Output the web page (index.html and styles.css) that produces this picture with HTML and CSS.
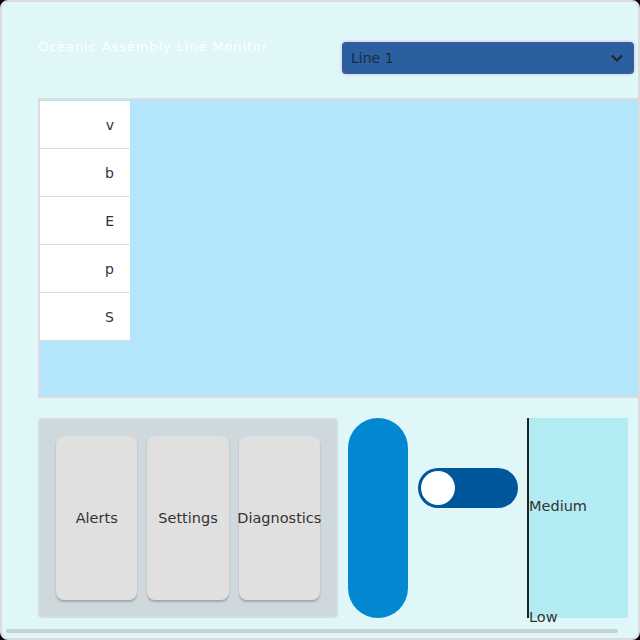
FILE: index.html
```html
<!DOCTYPE html>
<html>
<head>
<meta charset="utf-8">
<link rel="stylesheet" href="styles.css">
</head>
<body>
<div class="app">
  <div class="header">
    <div class="title">Oceanic Assembly Line Monitor</div>
    <div class="select">
      <span class="select-text">Line 1</span>
      <svg class="chev" width="14" height="10" viewBox="0 0 14 10"><path d="M2 2.5 L7 7.5 L12 2.5" fill="none" stroke="#1c2530" stroke-width="2.2"/></svg>
    </div>
  </div>
  <div class="chart">
    <div class="legend">
      <div class="cell">v</div>
      <div class="cell">b</div>
      <div class="cell">E</div>
      <div class="cell">p</div>
      <div class="cell">S</div>
    </div>
  </div>
  <div class="controls">
    <div class="btn-panel">
      <div class="btn">Alerts</div>
      <div class="btn">Settings</div>
      <div class="btn">Diagnostics</div>
    </div>
    <div class="pill"></div>
    <div class="toggle-wrap">
      <div class="toggle"><div class="knob"></div></div>
    </div>
    <div class="gauge">
      <span class="g-label g-medium">Medium</span>
      <span class="g-label g-low">Low</span>
    </div>
  </div>
  <div class="scrollbar"></div>
</div>
</body>
</html>
```
FILE: styles.css
```css
html, body {
  margin: 0;
  padding: 0;
  background: #000;
}
.app {
  width: 640px;
  height: 640px;
  box-sizing: border-box;
  border: 2px solid #dcdcdc;
  border-radius: 8px;
  background: #e0f7fa;
  padding: 38px 0 0 36px;
  overflow: hidden;
  font-family: "DejaVu Sans", sans-serif;
  position: relative;
}
.header {
  display: flex;
  align-items: flex-start;
  justify-content: space-between;
  width: 598px;
  height: 36px;
}
.title {
  color: #fff;
  font-size: 13px;
  letter-spacing: 0.9px;
  line-height: 14px;
  margin-top: 0;
}
.select {
  width: 296px;
  height: 36px;
  box-sizing: border-box;
  border: 2px solid #dde3e6;
  border-radius: 6px;
  background: #2b5fa0;
  display: flex;
  align-items: center;
  justify-content: space-between;
  padding: 0 10px 0 9px;
}
.select-text {
  color: #1d2a3a;
  font-size: 14px;
}
.chart {
  margin-top: 22px;
  width: 640px;
  height: 300px;
  box-sizing: border-box;
  border: 2px solid #dcdcdc;
  background: #b3e5fc;
  padding-top: 1px;
}
.legend {
  width: 90px;
  background: #fff;
}
.cell {
  height: 48px;
  box-sizing: border-box;
  border-bottom: 1px solid #dddddd;
  display: flex;
  align-items: center;
  justify-content: flex-end;
  padding-right: 16px;
  font-size: 14px;
  color: #333;
}
.controls {
  margin-top: 20px;
  display: flex;
  align-items: flex-start;
  height: 200px;
}
.btn-panel {
  width: 300px;
  height: 200px;
  box-sizing: border-box;
  border: 2px solid #d6dde0;
  border-radius: 4px;
  background: #cfd8dc;
  display: flex;
  gap: 10px;
  padding: 16px 16px 16px 16px;
}
.btn {
  flex: 1 1 0;
  min-width: 0;
  background: #e0e0e0;
  border-radius: 8px;
  box-shadow: 0 2px 2px rgba(0,0,0,0.22);
  display: flex;
  align-items: center;
  justify-content: center;
  font-size: 14.5px;
  color: #333;
  white-space: nowrap;
}
.pill {
  margin-left: 10px;
  width: 60px;
  height: 200px;
  border-radius: 30px;
  background: #0288d1;
}
.toggle-wrap {
  margin-left: 10px;
  padding-top: 50px;
}
.toggle {
  width: 100px;
  height: 40px;
  border-radius: 20px;
  background: #01579b;
  display: flex;
  align-items: center;
  padding-left: 3px;
  box-sizing: border-box;
}
.knob {
  width: 34px;
  height: 34px;
  border-radius: 50%;
  background: #fff;
}
.gauge {
  margin-left: 9px;
  width: 101px;
  height: 200px;
  box-sizing: border-box;
  border-left: 2px solid #222;
  background: #b2ebf2;
  position: relative;
}
.g-label {
  position: absolute;
  left: 0;
  font-size: 14.5px;
  color: #333;
  line-height: 18px;
}
.g-medium {
  top: 79px;
}
.g-low {
  top: 190px;
}
.scrollbar {
  position: absolute;
  left: 4px;
  bottom: 5px;
  width: 612px;
  height: 4px;
  border-radius: 2px;
  background: #c4d3d4;
}
```
